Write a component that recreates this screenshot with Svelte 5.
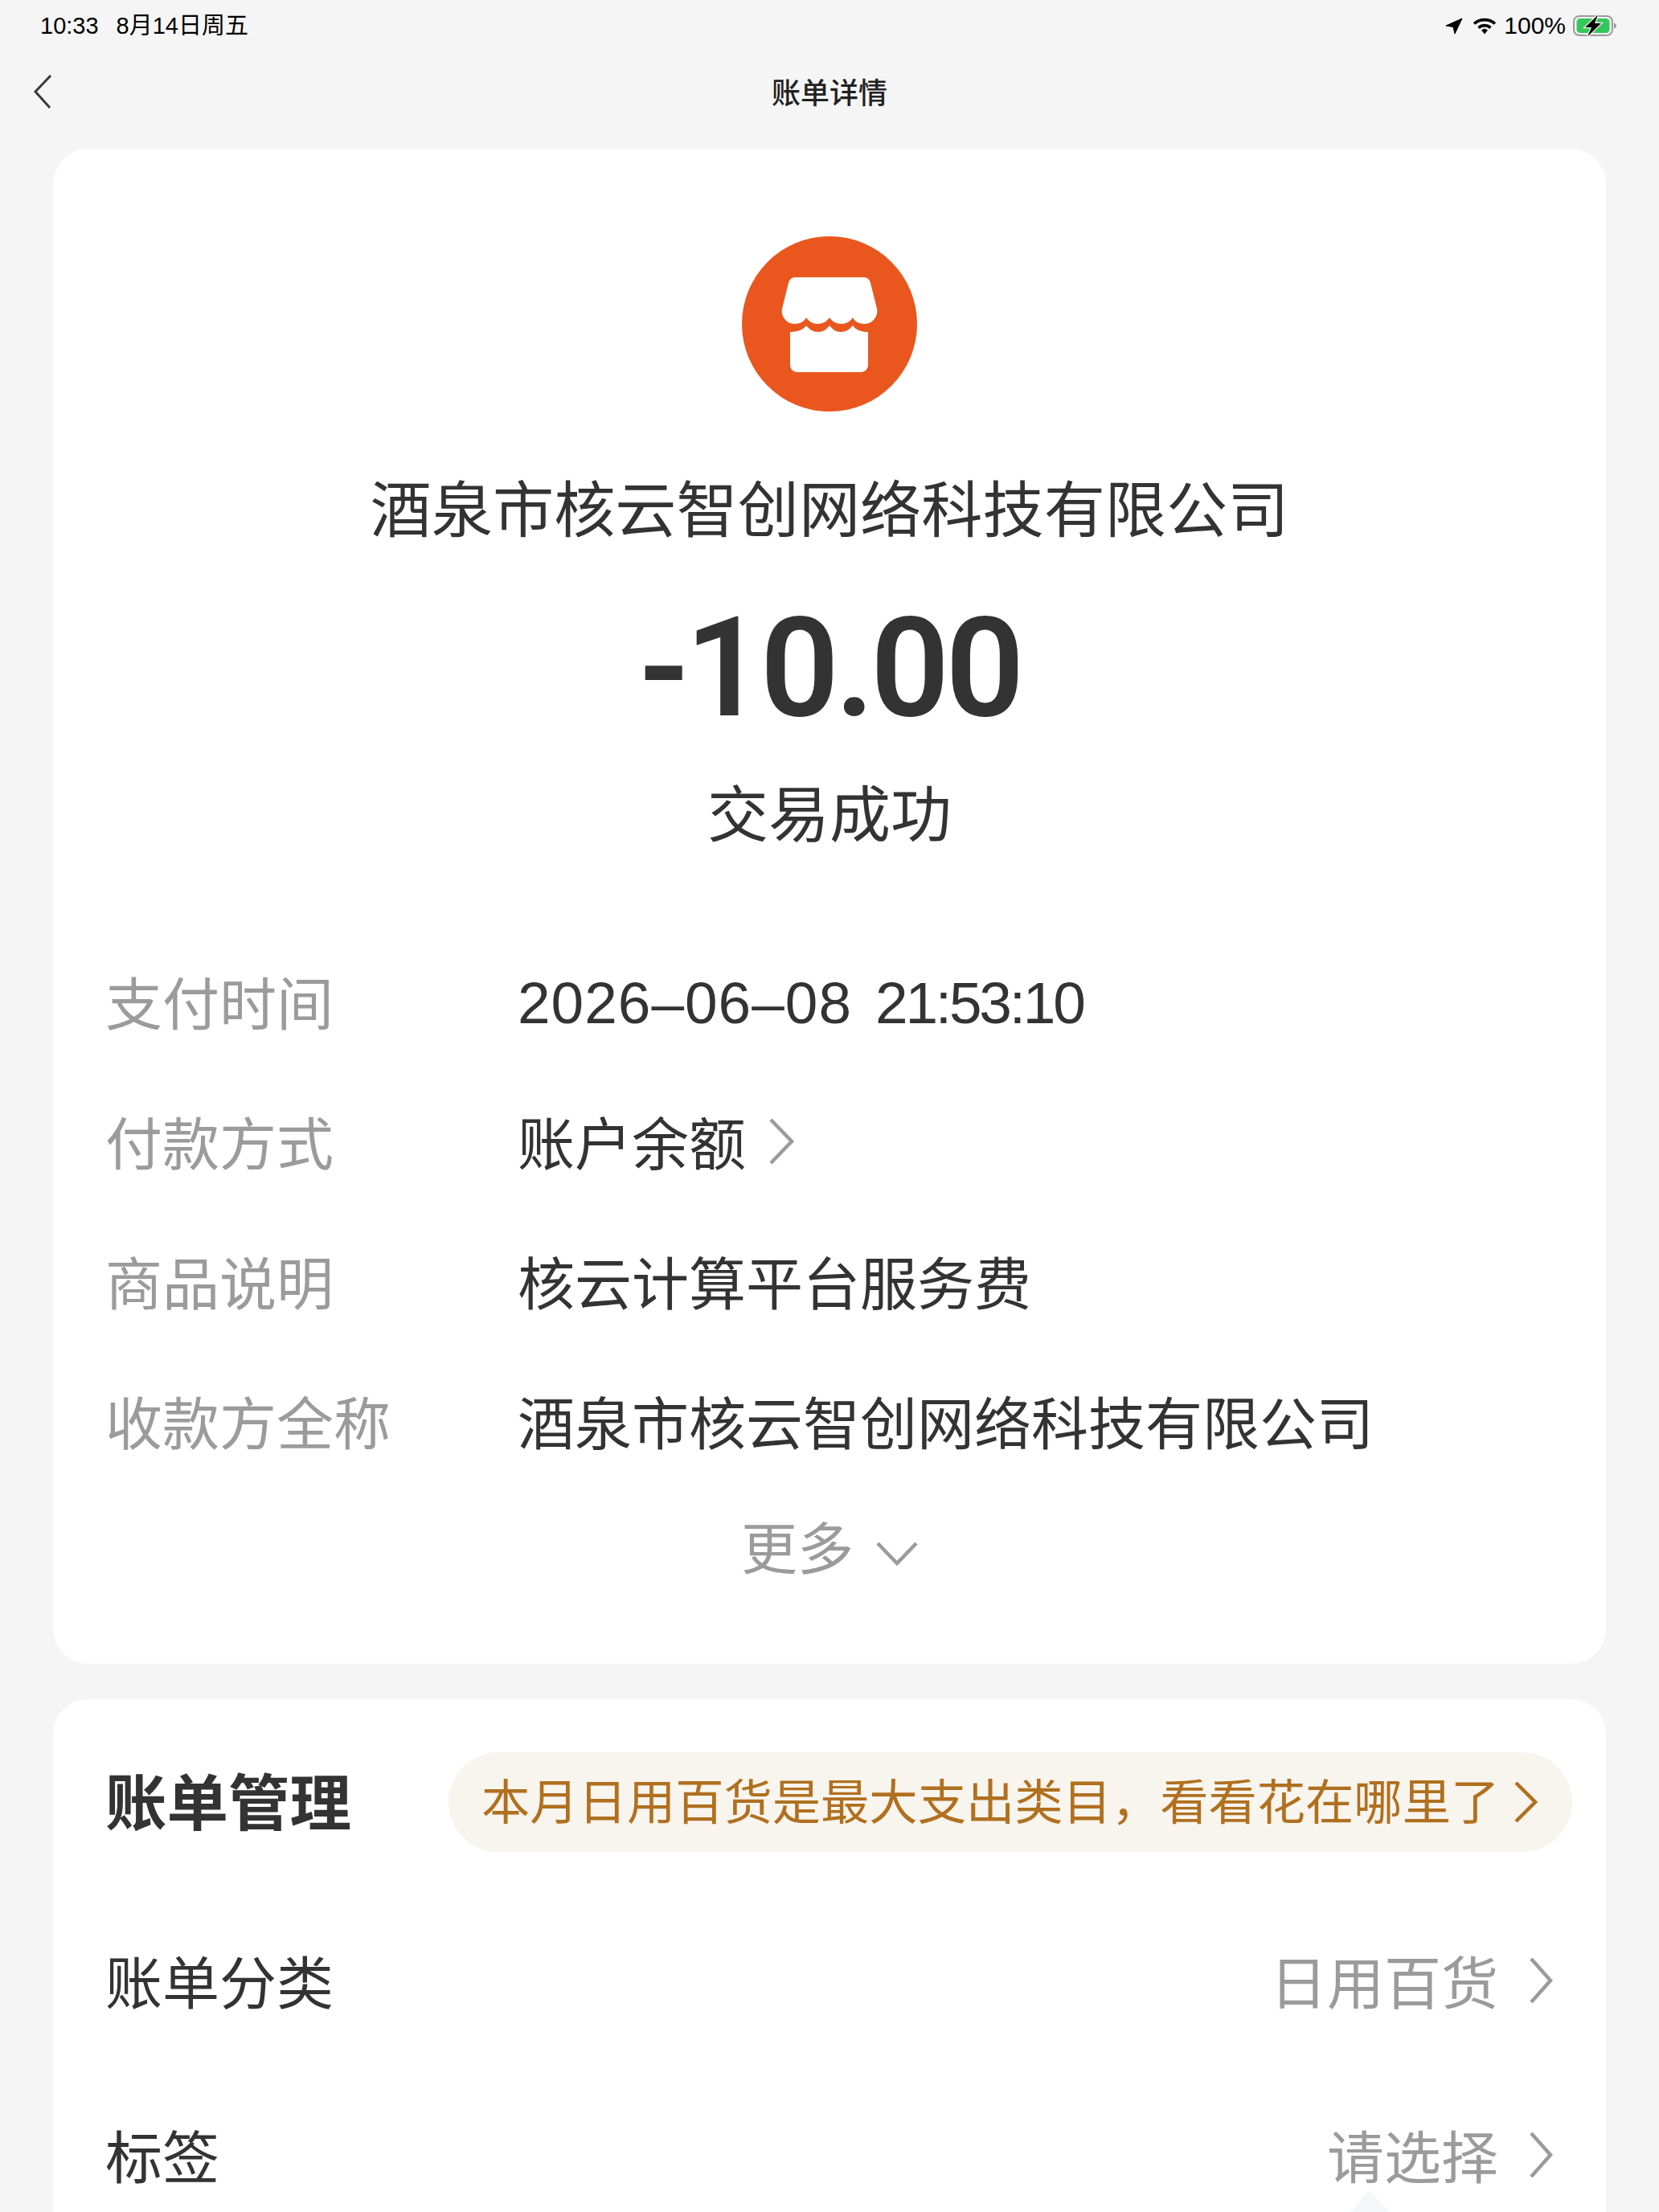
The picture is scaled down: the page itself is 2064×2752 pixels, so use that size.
<script>
  const rows = [
    { label: '付款方式', value: '账户余额', arrow: true },
    { label: '商品说明', value: '核云计算平台服务费' },
    { label: '收款方全称', value: '酒泉市核云智创网络科技有限公司' }
  ];
</script>

<div class="page">
  <header class="status">
    <div class="time"><span>10:33</span><span class="date">8月14日周五</span></div>
    <div class="sys">
      <svg class="loc" width="22" height="22" viewBox="0 0 22 22"><path d="M21 2 1 11l9 1.500L12 21z" fill="#000" stroke="#000" stroke-linejoin="round"/></svg>
      <svg width="30" height="22" viewBox="0 0 30 22"><g fill="none" stroke="#000" stroke-width="3.600"><path d="M2 8.500c7.500-6.500 18.500-6.500 26 0"/><path d="M7.500 13.500c4.500-3.800 10.500-3.800 15 0"/></g><path d="m11 16.500 4-2 4 2-4 5z" fill="#000"/></svg>
      <span class="pct">100%</span>
      <svg width="56" height="28" viewBox="0 0 56 28">
        <rect x="1" y="2" width="48" height="24" rx="7" fill="none" stroke="#9a9a9a" stroke-width="2"/>
        <rect x="4.500" y="5" width="41" height="18" rx="4.500" fill="#34c759"/>
        <path d="M51 10.500c2 .5 3 2 3 3.500s-1 3-3 3.500z" fill="#9a9a9a"/>
        <path d="M31 0.500 15 16h8l-5 11.500L35 11h-8z" fill="#000" stroke="#f5f5f5" stroke-width="2.500" paint-order="stroke"/>
      </svg>
    </div>
  </header>

  <nav class="nav">
    <svg class="back" width="26" height="44" viewBox="0 0 26 44"><path d="M23 2 4 22l18 20" fill="none" stroke="#3a3a3a" stroke-width="3"/></svg>
    <h1>账单详情</h1>
  </nav>

  <section class="card main">
    <div class="logo">
      <svg width="218" height="218" viewBox="0 0 218 218">
        <circle cx="109" cy="109" r="109" fill="#e9571f"/>
        <path d="M66 51H152c4 0 7 3 8 7l8 32c2 10-6 19-15 19-7 0-13-3-15-8-3 5-9 8-14 8-6 0-12-3-15-8-3 5-9 8-15 8-5 0-11-3-14-8-2 5-8 8-15 8-9 0-17-9-15-19l8-32c1-4 4-7 8-7z" fill="#fff"/>
        <path d="M60 119c8 0 16-2 20-8 4 5 9 8 15 8 6 0 10-3 14-8 4 5 8 8 14 8 6 0 11-3 15-8 4 6 11 8 19 8V160c0 5-4 9-9 9H69c-5 0-9-4-9-9z" fill="#fff"/>
      </svg>
    </div>
    <div class="merchant">酒泉市核云智创网络科技有限公司</div>
    <div class="amount">-10.00</div>
    <div class="state">交易成功</div>

    <div class="rows">
      <div class="row">
        <span class="label">支付时间</span>
        <span class="value num"><span class="day">2026–06–08</span><span class="clock">21:53:10</span></span>
      </div>
      {#each rows as r}
        <div class="row">
          <span class="label">{r.label}</span>
          <span class="value">{r.value}
            {#if r.arrow}
              <svg class="chev" width="34" height="60" viewBox="0 0 34 60"><path d="M4 3l26 27L4 57" fill="none" stroke="#9b9b9b" stroke-width="4.500"/></svg>
            {/if}
          </span>
        </div>
      {/each}
    </div>
    <div class="more">
      <span>更多</span>
      <svg width="52" height="32" viewBox="0 0 52 32"><path d="M2 3l24 25L50 3" fill="none" stroke="#9b9b9b" stroke-width="4.500"/></svg>
    </div>
  </section>

  <section class="card manage">
    <div class="head">
      <h2>账单管理</h2>
      <div class="pill">
        <span>本月日用百货是最大支出类目，看看花在哪里了</span>
        <svg width="30" height="56" viewBox="0 0 30 56"><path d="M3 4l24 24L3 52" fill="none" stroke="#b0701f" stroke-width="4.500"/></svg>
      </div>
    </div>
    <div class="item first">
      <span>账单分类</span>
      <span class="right">日用百货
        <svg class="chev" width="30" height="60" viewBox="0 0 30 60"><path d="M3 3l24 27L3 57" fill="none" stroke="#9b9b9b" stroke-width="4.500"/></svg>
      </span>
    </div>
    <div class="item">
      <span>标签</span>
      <span class="right">请选择
        <svg class="chev" width="30" height="60" viewBox="0 0 30 60"><path d="M3 3l24 27L3 57" fill="none" stroke="#9b9b9b" stroke-width="4.500"/></svg>
      </span>
    </div>
    <div class="tri"></div>
  </section>
</div>

<style>
  :global(body) { margin: 0; background: #f5f5f5; }
  .page {
    width: 2064px; height: 2752px; overflow: hidden; background: #f5f5f5; color: #333;
    font-family: "Noto Sans CJK SC", "Liberation Sans", sans-serif; font-weight: 400;
  }
  .status { height: 64px; display: flex; justify-content: space-between; align-items: center; padding: 0 51px 0 50px; color: #000; font-size: 29px; }
  .time { display: flex; align-items: center; gap: 22px; font-family: "Liberation Sans", "Noto Sans CJK SC", sans-serif; }
  .date { font-size: 29px; line-height: 40px; }
  .sys { display: flex; align-items: center; gap: 9px; }
  .loc { margin-right: 3px; }
  .pct { font-family: "Liberation Sans", sans-serif; font-size: 30px; }
  .nav { height: 121px; position: relative; display: flex; align-items: center; justify-content: center; }
  .nav h1 { margin: 0 0 24px; font-size: 36px; font-weight: 500; color: #222; }
  .back { position: absolute; left: 40px; top: 28px; }
  .card { margin: 0 66px; background: #fff; border-radius: 44px; }
  .main { height: 1885px; display: flex; flex-direction: column; align-items: center; padding-top: 109px; box-sizing: border-box; }
  .logo { height: 218px; }
  .logo svg { display: block; }
  .merchant { margin-top: 62px; font-size: 76.200px; line-height: 110px; white-space: nowrap; }
  .amount { margin-top: 47px; font-family: "Roboto", sans-serif; font-weight: 600; font-size: 172px; line-height: 200px; letter-spacing: -5px; color: #333; }
  .state { margin-top: 22px; font-size: 76px; line-height: 110px; }
  .rows { align-self: stretch; margin-top: 94px; padding-left: 65px; }
  .row { display: flex; height: 174px; align-items: center; font-size: 71px; }
  .label { width: 513px; color: #9b9b9b; flex: none; }
  .value { display: flex; align-items: center; gap: 27px; white-space: nowrap; }
  .num { font-family: "Liberation Sans", sans-serif; font-size: 73px; gap: 29px; padding-top: 6px; }
  .day { letter-spacing: 1px; }
  .clock { letter-spacing: -3.200px; }
  .more { display: flex; align-items: center; gap: 28px; color: #9b9b9b; font-size: 70px; height: 100px; margin-top: 19px; }
  .more svg { margin-top: 22px; }
  .manage { margin-top: 44px; height: 800px; padding: 66px 42px 0 65px; position: relative; }
  .head { display: flex; align-items: center; justify-content: space-between; height: 124px; }
  h2 { margin: 0 0 10px; font-size: 76.500px; font-weight: 700; color: #333; }
  .pill { width: 1398px; height: 124px; box-sizing: border-box; border-radius: 62px; background: #f8f4ee; color: #b0701f; font-size: 60.300px; display: flex; align-items: center; gap: 18px; padding-left: 41px; white-space: nowrap; }
  .pill span { margin-bottom: 10px; }
  .item { display: flex; justify-content: space-between; align-items: center; height: 217px; font-size: 71px; padding-right: 24px; }
  .first { margin-top: 49px; }
  .right { display: flex; align-items: center; gap: 38px; color: #9b9b9b; }
  .chev { margin-top: 4px; }
  .tri { position: absolute; left: 1614px; top: 611px; width: 0; height: 0; border: 24px solid transparent; border-bottom-color: #f5f6fa; border-top-width: 0; border-bottom-width: 27px; }
</style>
